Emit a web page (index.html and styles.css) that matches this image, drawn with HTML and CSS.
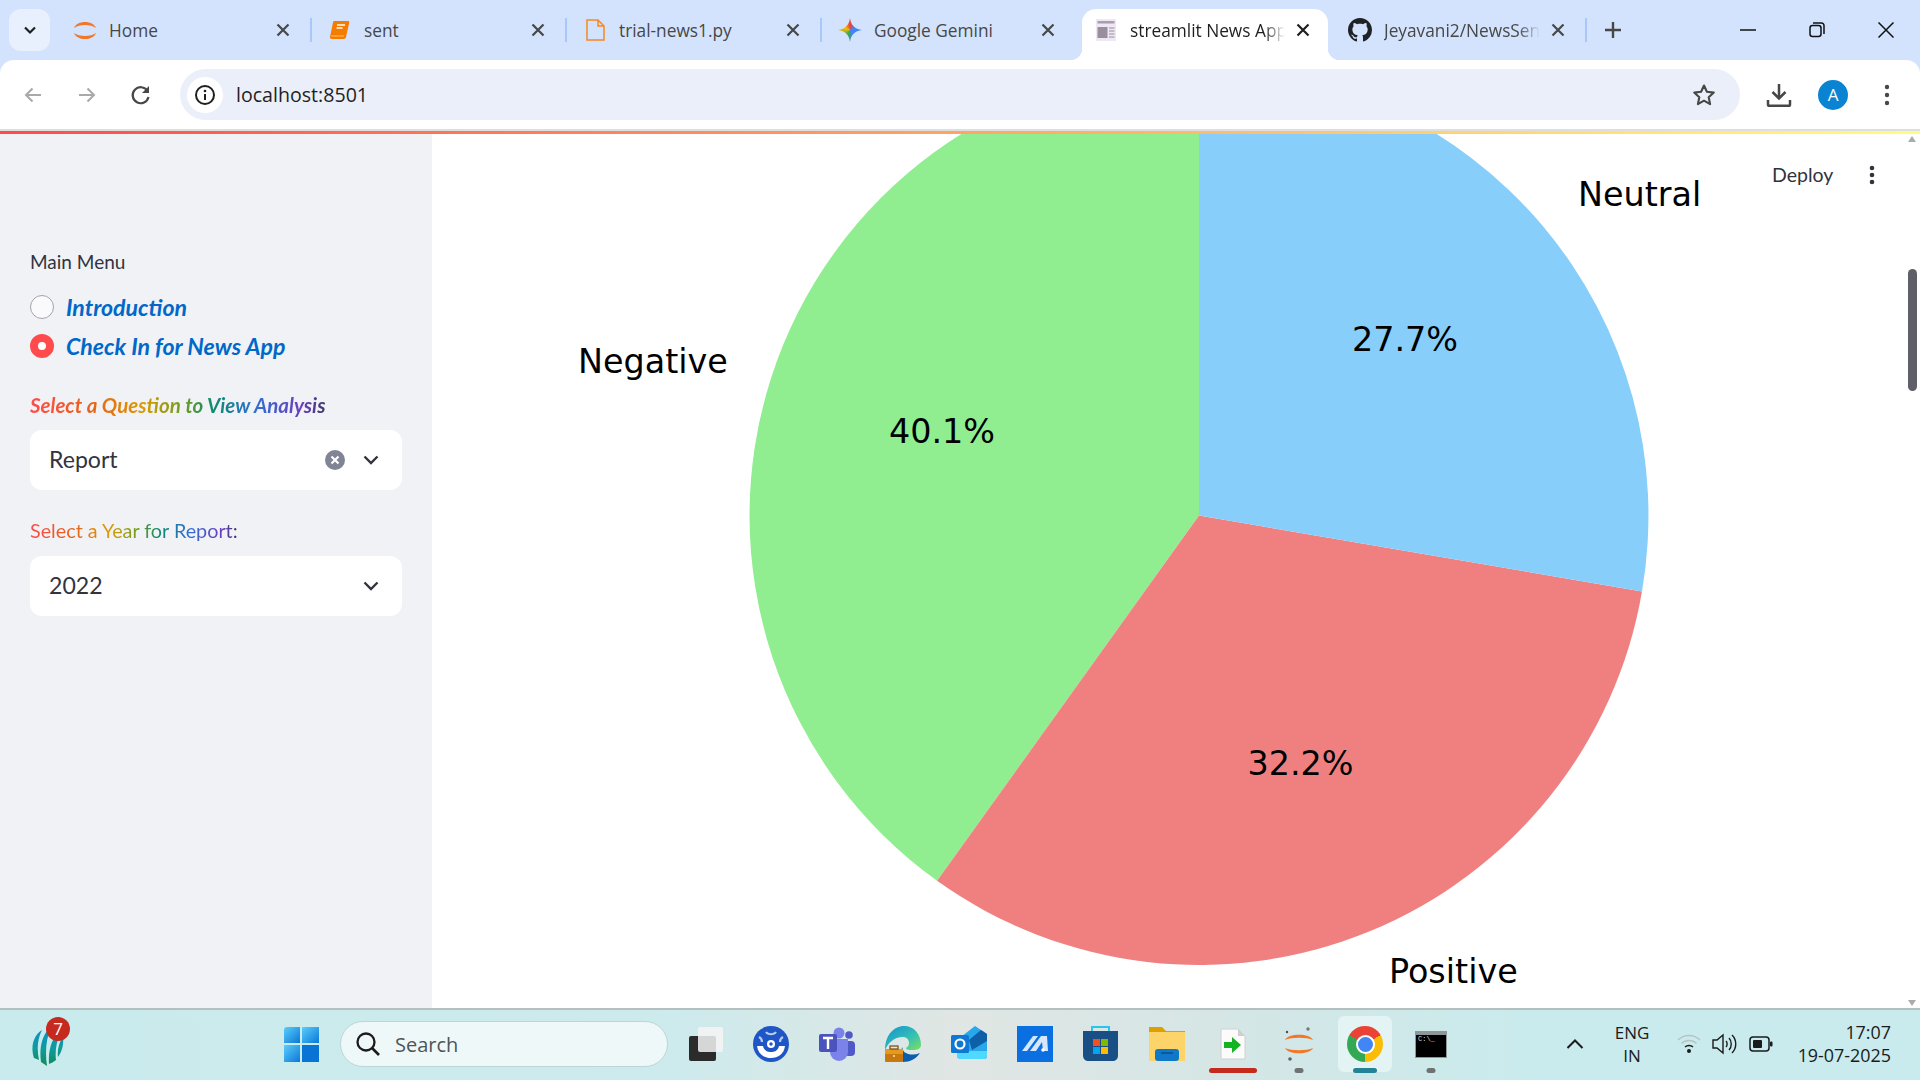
FILE: index.html
```html
<!DOCTYPE html>
<html lang="en">
<head>
<meta charset="UTF-8">
<title>streamlit News App</title>
<link rel="stylesheet" href="styles.css">
</head>
<body>
<!-- chrome tab strip -->
<div class="tabbar">
    <div class="tab-list"><svg width="16" height="16" viewBox="0 0 16 16"><path d="M3 5.5l5 5 5-5" fill="none" stroke="#1f1f1f" stroke-width="2.2"/></svg></div>
    <div class="tab">
        <svg class="fav" width="24" height="24" viewBox="0 0 24 24"><path d="M1 10C4 2 20 2 23 10 18 6 6 6 1 10Z" fill="#f37726"/><path d="M1 15C4 23 20 23 23 15 18 19 6 19 1 15Z" fill="#f37726"/></svg>
        <span class="tab-name">Home</span>
        <svg class="tab-x" width="16" height="16" viewBox="0 0 16 16"><path d="M2.5 2.5l11 11M13.5 2.5l-11 11" stroke="#474747" stroke-width="2.2"/></svg>
    </div>
    <div class="tab">
        <svg class="fav" width="24" height="24" viewBox="0 0 24 24"><path d="M6 3h14c1 0 1.500.6 1.300 1.500L18 19c-.2 1-.9 2-2.300 2H4c-1.500 0-2.300-1-2-2.300L5 4.500C5.200 3.500 5.500 3 6 3Z" fill="#f57c00"/><path d="M9 7h8M8.500 10h6" stroke="#fff" stroke-width="1.300"/><path d="M3 18h13" stroke="#ffb74d" stroke-width="1.200"/></svg>
        <span class="tab-name">sent</span>
        <svg class="tab-x" width="16" height="16" viewBox="0 0 16 16"><path d="M2.500 2.500l11 11M13.500 2.500l-11 11" stroke="#474747" stroke-width="2.200"/></svg>
    </div>
    <div class="tab">
        <svg class="fav" width="24" height="24" viewBox="0 0 24 24"><path d="M4 2h11l6 6v14H4Z M15 2v6h6" fill="none" stroke="#f68a1e" stroke-width="1.500"/></svg>
        <span class="tab-name">trial-news1.py</span>
        <svg class="tab-x" width="16" height="16" viewBox="0 0 16 16"><path d="M2.500 2.500l11 11M13.500 2.500l-11 11" stroke="#474747" stroke-width="2.200"/></svg>
    </div>
    <div class="tab">
        <div class="fav gemini"></div>
        <span class="tab-name">Google Gemini</span>
        <svg class="tab-x" width="16" height="16" viewBox="0 0 16 16"><path d="M2.500 2.500l11 11M13.500 2.500l-11 11" stroke="#474747" stroke-width="2.200"/></svg>
    </div>
    <div class="tab active">
        <svg class="fav" width="24" height="24" viewBox="0 0 24 24"><rect x="2" y="1" width="20" height="22" fill="#efe7f3"/><rect x="3.500" y="3" width="17" height="2.500" fill="#a89eae"/><rect x="3.500" y="9" width="10" height="11" fill="#97909c"/><path d="M15 10h5.500M15 13h5.500M15 16h5.500M15 19h5.500" stroke="#b5aeb9" stroke-width="1.300"/></svg>
        <span class="tab-name fade">streamlit News App</span>
        <svg class="tab-x" width="16" height="16" viewBox="0 0 16 16"><path d="M2.500 2.500l11 11M13.500 2.500l-11 11" stroke="#1f1f1f" stroke-width="2.200"/></svg>
    </div>
    <div class="tab">
        <svg class="fav" width="24" height="24" viewBox="0 0 16 16"><path fill="#1f2328" d="M8 0C3.580 0 0 3.580 0 8c0 3.540 2.290 6.530 5.470 7.590.4.070.55-.17.55-.38 0-.19-.01-.82-.01-1.490-2.010.37-2.530-.49-2.690-.94-.09-.23-.48-.94-.82-1.130-.28-.15-.68-.52-.01-.53.63-.01 1.080.58 1.230.82.720 1.210 1.870.87 2.330.66.070-.52.280-.87.510-1.070-1.780-.2-3.640-.89-3.640-3.950 0-.87.310-1.590.820-2.150-.08-.2-.36-1.020.080-2.120 0 0 .67-.21 2.200.82.640-.18 1.320-.27 2-.27.68 0 1.360.09 2 .27 1.530-1.040 2.200-.82 2.200-.82.440 1.100.160 1.920.080 2.120.510.560.820 1.270.820 2.150 0 3.070-1.870 3.750-3.650 3.950.290.250.540.730.540 1.480 0 1.070-.01 1.930-.01 2.200 0 .210.150.460.550.380A8.013 8.013 0 0016 8c0-4.420-3.580-8-8-8z"/></svg>
        <span class="tab-name fade">Jeyavani2/NewsSentiment</span>
        <svg class="tab-x" width="16" height="16" viewBox="0 0 16 16"><path d="M2.500 2.500l11 11M13.500 2.500l-11 11" stroke="#474747" stroke-width="2.200"/></svg>
    </div>
    <div class="new-tab"><svg width="18" height="18" viewBox="0 0 18 18"><path d="M9 1v16M1 9h16" stroke="#474747" stroke-width="2.400"/></svg></div>
    <div class="win-btns">
        <div class="win-btn"><svg width="16" height="16" viewBox="0 0 16 16"><path d="M0 8h16" stroke="#111" stroke-width="1.500"/></svg></div>
        <div class="win-btn"><svg width="16" height="16" viewBox="0 0 16 16"><rect x="1" y="3.500" width="11" height="11" rx="2.500" fill="none" stroke="#111" stroke-width="1.500"/><path d="M4 1h8.500A2.500 2.500 0 0115 3.500V12" fill="none" stroke="#111" stroke-width="1.500"/></svg></div>
        <div class="win-btn"><svg width="16" height="16" viewBox="0 0 16 16"><path d="M.5.5l15 15M15.500.5l-15 15" stroke="#111" stroke-width="1.500"/></svg></div>
    </div>
</div>

<!-- address bar -->
<div class="toolbar">
    <div class="tool-btn"><svg width="20" height="20" viewBox="0 0 20 20"><path d="M18 10H3M9.500 3.500L3 10l6.500 6.500" fill="none" stroke="#a9a9a9" stroke-width="2"/></svg></div>
    <div class="tool-btn"><svg width="20" height="20" viewBox="0 0 20 20"><path d="M2 10h15M10.500 3.500L17 10l-6.500 6.500" fill="none" stroke="#a9a9a9" stroke-width="2"/></svg></div>
    <div class="tool-btn"><svg width="22" height="22" viewBox="0 0 22 22"><path d="M17.500 7A8 8 0 1018.500 13" fill="none" stroke="#474747" stroke-width="2.200"/><path d="M19 2v7h-7Z" fill="#474747"/></svg></div>
    <div class="omnibox">
        <div class="site-info"><svg width="22" height="22" viewBox="0 0 22 22"><circle cx="11" cy="11" r="9" fill="none" stroke="#1f1f1f" stroke-width="2"/><path d="M11 10v6" stroke="#1f1f1f" stroke-width="2"/><circle cx="11" cy="7" r="1.300" fill="#1f1f1f"/></svg></div>
        <span class="url">localhost:8501</span>
        <svg class="star" width="24" height="24" viewBox="0 0 24 24"><path d="M12 2.500l2.900 6.300 6.900.8-5.100 4.700 1.400 6.800-6.100-3.400-6.100 3.400 1.400-6.800L2.200 9.600l6.900-.8Z" fill="none" stroke="#474747" stroke-width="2.100" stroke-linejoin="round"/></svg>
    </div>
    <div class="tool-btn right-first"><svg width="26" height="26" viewBox="0 0 26 26"><path d="M13 2v14M6.500 10l6.500 6.500 6.500-6.500" fill="none" stroke="#474747" stroke-width="2.500"/><path d="M2 18v4.500c0 .8.500 1.300 1.300 1.300h19.400c.8 0 1.300-.5 1.300-1.300V18" fill="none" stroke="#474747" stroke-width="2.500"/></svg></div>
    <div class="tool-btn"><span class="avatar">A</span></div>
    <div class="tool-btn"><svg width="6" height="22" viewBox="0 0 6 22"><circle cx="3" cy="3" r="2.200" fill="#474747"/><circle cx="3" cy="11" r="2.200" fill="#474747"/><circle cx="3" cy="19" r="2.200" fill="#474747"/></svg></div>
</div>
<div class="decoration"></div>

<!-- streamlit app -->
<div class="app">
    <aside class="sidebar">
        <div class="menu-title">Main Menu</div>
        <div class="radios">
            <div class="radio-row"><span class="radio"></span><em class="radio-label">Introduction</em></div>
            <div class="radio-row"><span class="radio on"></span><em class="radio-label">Check In for News App</em></div>
        </div>
        <div class="rainbow q-label"><em>Select a Question to View Analysis</em></div>
        <div class="select">
            <span class="select-val">Report</span>
            <span class="clear"><svg width="10" height="10" viewBox="0 0 10 10"><path d="M1.500 1.500l7 7M8.500 1.500l-7 7" stroke="#fff" stroke-width="2.200"/></svg></span>
            <svg class="chev" width="16" height="10" viewBox="0 0 16 10"><path d="M1.500 1.500L8 8l6.500-6.500" fill="none" stroke="#31333f" stroke-width="2.400"/></svg>
        </div>
        <div class="rainbow y-label">Select a Year for Report:</div>
        <div class="select year">
            <span class="select-val">2022</span>
            <svg class="chev" width="16" height="10" viewBox="0 0 16 10"><path d="M1.500 1.500L8 8l6.500-6.500" fill="none" stroke="#31333f" stroke-width="2.400"/></svg>
        </div>
    </aside>
    <main class="main">
        <svg class="pie" width="1488" height="874" viewBox="0 0 1488 874">
            <path d="M767 381.500L767 -68A449.500 449.500 0 0 0 505.100 746.800Z" fill="#90ee90"/>
            <path d="M767 381.500L505.100 746.800A449.500 449.500 0 0 0 1210 457.400Z" fill="#f08080"/>
            <path d="M767 381.500L1210 457.400A449.500 449.500 0 0 0 767 -68Z" fill="#87cefa"/>
            <text x="1146" y="72">Neutral</text>
            <text x="146" y="239">Negative</text>
            <text x="957" y="849">Positive</text>
            <text class="pct" x="973" y="217">27.7%</text>
            <text class="pct" x="510" y="309">40.1%</text>
            <text class="pct" x="868.500" y="641">32.2%</text>
        </svg>
        <div class="app-head">
            <span class="deploy">Deploy</span>
            <svg width="6" height="20" viewBox="0 0 6 20"><circle cx="3" cy="3" r="2.300" fill="#31333f"/><circle cx="3" cy="10" r="2.300" fill="#31333f"/><circle cx="3" cy="17" r="2.300" fill="#31333f"/></svg>
        </div>
        <div class="arrow-up"></div>
        <div class="thumb"></div>
        <div class="arrow-down"></div>
    </main>
</div>

<!-- windows taskbar -->
<div class="taskbar">
    <div class="tb-app">
        <svg width="34" height="44" viewBox="0 0 34 44"><defs><linearGradient id="iccg" x1="0" y1="0" x2="0" y2="1"><stop offset="0" stop-color="#0c8fd0"/><stop offset=".55" stop-color="#0f9c9c"/><stop offset="1" stop-color="#128a5c"/></linearGradient></defs><path d="M3 36C-1 24 3 13 11 8 6 18 6 28 8 38ZM10 40C8 26 11 12 20 5 15 17 14 30 16 44ZM18 42C17 28 21 14 30 10 25 20 24 30 25 38 23 40 20 41 18 42ZM27 35C31 30 33 22 32 14 28 21 26 28 27 35Z" fill="url(#iccg)"/></svg>
        <span class="badge">7</span>
    </div>
    <div class="tb-icon"><div class="winlogo"><i></i><i></i><i></i><i></i></div></div>
    <div class="search">
        <svg width="26" height="26" viewBox="0 0 26 26"><circle cx="11" cy="11" r="8.500" fill="none" stroke="#1b1b1b" stroke-width="2.300"/><path d="M17 17l7 7" stroke="#1b1b1b" stroke-width="2.600"/></svg>
        <span>Search</span>
    </div>
    <div class="tb-icons">
        <div class="tb-icon"><svg width="36" height="36" viewBox="0 0 36 36"><rect x="2" y="10" width="27" height="25" rx="2" fill="#2b2b2b"/><rect x="11" y="1" width="25" height="25" rx="2" fill="#f5f5f5" fill-opacity=".85"/></svg></div>
        <div class="tb-icon"><svg width="36" height="36" viewBox="0 0 36 36"><circle cx="18" cy="18" r="18" fill="#1f55c4"/><path d="M4 20h28c-1 8-7 12-14 12S5 28 4 20Z" fill="#fff"/><path d="M10 20c1 5 5 6 8 6s7-1 8-6Z" fill="#1f55c4"/><circle cx="18" cy="18" r="4" fill="#fff"/><circle cx="18" cy="18" r="1.700" fill="#1f55c4"/><path d="M13 6c2 3 8 3 10 0M6 11c2 1 3 3 3 5M30 11c-2 1-3 3-3 5" fill="none" stroke="#b7ccf5" stroke-width="2.200"/></svg></div>
        <div class="tb-icon"><svg width="36" height="36" viewBox="0 0 36 36"><circle cx="30" cy="9" r="3.800" fill="#5059c9"/><rect x="25" y="15" width="11" height="15" rx="4" fill="#5059c9"/><circle cx="20" cy="7" r="5.500" fill="#7b83eb"/><path d="M11 13h18v13a9 9 0 01-18 0Z" fill="#7b83eb"/><rect y="8" width="18" height="18" rx="2" fill="#4b53bc"/><path d="M4 12h10M9 12v11" stroke="#fff" stroke-width="2.400"/></svg></div>
        <div class="tb-icon"><svg width="36" height="36" viewBox="0 0 36 36"><defs><linearGradient id="edgeg" x1="0" y1="0" x2="1" y2="1"><stop offset="0" stop-color="#0f8fd6"/><stop offset=".6" stop-color="#37c2b0"/><stop offset="1" stop-color="#7be05f"/></linearGradient></defs><path d="M0 24C0 9 9 0 19 0c10 0 17 8 17 19 0 4-4 5-8 5-3 0-7 0-7-2 2-1 3-3 3-5 0-4-3-6-6-6-9 0-15 6-18 13Z" fill="url(#edgeg)"/><path d="M18 36c7 0 13-3 17-9-5 2-10 2-14 0-3-1-3-4-4-6-1 5-1 11 1 15Z" fill="#0b5eab"/><rect y="23" width="18" height="13" rx="1" fill="#c9780f"/><rect y="23" width="18" height="5" fill="#e39a1e"/><rect x="5" y="20" width="8" height="3" fill="none" stroke="#7a4a08" stroke-width="1.200"/><circle cx="9" cy="30" r="1" fill="#ffe7a8"/></svg></div>
        <div class="tb-icon"><svg width="36" height="36" viewBox="0 0 36 36"><path d="M6 14L24 0l12 8v22c0 2-1 3-3 3H10c-2 0-4-1-4-3Z" fill="#28a8ea"/><path d="M18 14L30 4l6 4v7L21 24Z" fill="#0f5fa6"/><path d="M6 30V19l12 6h18v5c0 2-1 3-3 3H10c-2 0-4-1-4-3Z" fill="#50d9ff"/><rect y="9" width="18" height="18" rx="1.500" fill="#0f78d4"/><circle cx="9" cy="18" r="4.500" fill="none" stroke="#fff" stroke-width="2.200"/></svg></div>
        <div class="tb-icon"><svg width="36" height="36" viewBox="0 0 36 36"><rect width="36" height="36" fill="#0a6fe0"/><path d="M5 25L16 10h5L10 25ZM13 25l11-15h6l1 15h-5l-1-9-6 9Z" fill="#d6e6fb"/><circle cx="26" cy="24" r="1.800" fill="#fff"/></svg></div>
        <div class="tb-icon"><svg width="36" height="36" viewBox="0 0 36 36"><path d="M9 6V1h17v5" fill="none" stroke="#2bc4f0" stroke-width="2"/><path d="M0 5h35v24c0 4-2 6-6 6H6c-4 0-6-2-6-6Z" fill="#1a4f86"/><rect x="10" y="13" width="7" height="7" fill="#f25022"/><rect x="18" y="13" width="7" height="7" fill="#7fba00"/><rect x="10" y="21" width="7" height="7" fill="#00a4ef"/><rect x="18" y="21" width="7" height="7" fill="#ffb900"/></svg></div>
        <div class="tb-icon"><svg width="36" height="34" viewBox="0 0 36 34"><path d="M0 0h13l4 4h19v30H0Z" fill="#dca100"/><rect y="5" width="36" height="29" fill="#fcd46a"/><rect x="6" y="22" width="24" height="12" rx="3" fill="#0f78c9"/><path d="M12 26h12" stroke="#0a4f8c" stroke-width="1.500"/></svg></div>
        <div class="tb-icon"><svg width="26" height="32" viewBox="0 0 26 32"><path d="M1 1h17l7 7v23H1Z" fill="#fbfbfb" stroke="#d0d0d0"/><path d="M18 1v7h7Z" fill="#cfcfcf"/><path d="M4 14h8V9l9 8-9 8v-5H4Z" fill="#14b321"/></svg><span class="mark red"></span></div>
        <div class="tb-icon"><svg width="30" height="36" viewBox="0 0 30 36"><path d="M1 14C4 7 26 7 29 14 23 11 7 11 1 14Z" fill="#f37726"/><path d="M1 22C4 29 26 29 29 22 23 25 7 25 1 22Z" fill="#f37726"/><circle cx="3" cy="6" r="1.200" fill="#4e4e4e"/><circle cx="24" cy="3" r="1.700" fill="#767677"/><circle cx="6" cy="33" r="1.800" fill="#616262"/></svg><span class="mark dot"></span></div>
        <div class="tb-icon current"><div class="chrome"><div class="chrome-in"></div></div><span class="mark teal"></span></div>
        <div class="tb-icon"><div class="cmd"><span>C:\_</span></div><span class="mark dot"></span></div>
    </div>
    <div class="tray">
        <div class="tray-cell chev-up"><svg width="18" height="12" viewBox="0 0 18 12"><path d="M1.500 10L9 2.500 16.500 10" fill="none" stroke="#1b1b1b" stroke-width="2"/></svg></div>
        <div class="lang">ENG<br>IN</div>
        <div class="tray-cell"><svg width="24" height="20" viewBox="0 0 24 20"><path d="M1 6c6-6 16-6 22 0M4.500 9.500c4-4 11-4 15 0" fill="none" stroke="#b5c4c4" stroke-width="1.300"/><path d="M8 13c2-2 6-2 8 0" fill="none" stroke="#1b1b1b" stroke-width="1.400"/><circle cx="12" cy="17" r="2" fill="#1b1b1b"/></svg></div>
        <div class="tray-cell"><svg width="26" height="22" viewBox="0 0 26 22"><path d="M1 7h4l6-5v18l-6-5H1Z" fill="none" stroke="#1b1b1b" stroke-width="1.400"/><path d="M14 8c1.500 1.500 1.500 4.500 0 6M17 5c3 3 3 9 0 12M20 2c5 5 5 13 0 18" fill="none" stroke="#1b1b1b" stroke-width="1.400"/></svg></div>
        <div class="tray-cell"><svg width="24" height="16" viewBox="0 0 24 16"><rect x="1" y="1" width="19" height="14" rx="3" fill="none" stroke="#1b1b1b" stroke-width="1.500"/><rect x="4" y="4" width="9" height="8" rx="1" fill="#1b1b1b"/><rect x="21" y="5.500" width="2.500" height="5" rx="1" fill="#1b1b1b"/></svg></div>
        <div class="clock">17:07<br>19-07-2025</div>
    </div>
</div>
</body>
</html>
```

FILE: styles.css
```css
html{
    background: #fff;
}
html, body{
    margin: 0;
    height: 1080px;
    overflow: hidden;
}
body{
    font-family: "Open Sans", "Noto Sans", sans-serif;
    width: 1920px;
    background: #d3e3fd; /* shows through the rounded toolbar corners */
    display: flex;
    flex-direction: column;
}
svg{
    display: block;
    flex-shrink: 0;
}

/* tab strip */
.tabbar{
    height: 60px;
    flex-shrink: 0;
    background: #d3e3fd;
    display: flex;
    align-items: flex-end;
    padding-left: 9px;
}
.tab-list{
    width: 41px;
    height: 42px;
    margin: 0 7px 9px 0;
    border-radius: 12px;
    background: #e9f0fd;
    display: flex;
    align-items: center;
    justify-content: center;
}
.tab{
    width: 255px;
    height: 51px;
    box-sizing: border-box;
    padding: 0 21px 9px 16px;
    display: flex;
    align-items: center;
    position: relative;
}
.tab::after{
    content: "";
    position: absolute;
    right: 0;
    top: 9px;
    width: 2px;
    height: 24px;
    background: #a8c7fa;
}
.fav{
    width: 24px;
    height: 24px;
}
.gemini{
    background: conic-gradient(#ea4335 0deg, #4285f4 70deg, #4285f4 150deg, #34a853 200deg, #fbbc04 290deg, #ea4335 360deg);
    clip-path: path("M12 0C12.800 7 17 11.200 24 12C17 12.800 12.800 17 12 24C11.200 17 7 12.800 0 12C7 11.200 11.200 7 12 0Z");
}
.tab-name{
    flex: 1;
    margin-left: 12px;
    font-size: 17.300px;
    color: #474747;
    white-space: nowrap;
    overflow: hidden;
}
.tab-name.fade{
    margin-right: 5px;
    -webkit-mask-image: linear-gradient(to right, #000 86%, transparent 100%);
    mask-image: linear-gradient(to right, #000 86%, transparent 100%);
}
.tab-x{
    margin-left: 5px;
}
.tab:nth-child(5)::after, .tab.active::after{
    display: none;
}
.tab.active{
    width: 246px;
    margin: 0 4px 0 5px;
    padding: 0 17px 9px 12px;
    background: #fff;
    border-radius: 14px 14px 0 0;
}
.tab.active::before{
    content: "";
    position: absolute;
    left: -12px;
    right: -12px;
    bottom: 0;
    height: 12px;
    background:
        radial-gradient(circle at 0 0, #d3e3fd 12px, #fff 12.500px) left bottom / 12px 12px no-repeat,
        radial-gradient(circle at 100% 0, #d3e3fd 12px, #fff 12.500px) right bottom / 12px 12px no-repeat;
}
.tab.active .tab-name{
    color: #1f1f1f;
}
.new-tab{
    width: 52px;
    height: 42px;
    margin-bottom: 9px;
    display: flex;
    align-items: center;
    justify-content: center;
}
.win-btns{
    margin-left: auto;
    align-self: flex-start;
    display: flex;
}
.win-btn{
    width: 69px;
    height: 60px;
    display: flex;
    align-items: center;
    justify-content: center;
}

/* address bar */
.toolbar{
    height: 69px;
    flex-shrink: 0;
    box-sizing: border-box;
    background: #fff;
    border-radius: 14px 14px 0 0;
    padding: 0 6px 0 6px;
    display: flex;
    align-items: center;
}
.tool-btn{
    width: 54px;
    height: 54px;
    display: flex;
    align-items: center;
    justify-content: center;
}
.right-first{
    margin-left: 12px;
}
.omnibox{
    flex: 1;
    height: 51px;
    margin-left: 12px;
    padding: 0 24px 0 7px;
    background: #ebeff9;
    border-radius: 26px;
    display: flex;
    align-items: center;
}
.site-info{
    width: 36px;
    height: 36px;
    border-radius: 50%;
    background: #fff;
    display: flex;
    align-items: center;
    justify-content: center;
}
.url{
    flex: 1;
    margin-left: 13px;
    font-size: 19.600px;
    color: #1f1f1f;
}
.avatar{
    width: 30px;
    height: 30px;
    border-radius: 50%;
    background: #0a84d2;
    color: #fff;
    font-size: 17px;
    line-height: 30px;
    text-align: center;
}
.decoration{
    height: 3px;
    flex-shrink: 0;
    border-top: 2px solid #dedede;
    background: linear-gradient(90deg, #ff4b4b, #fffd80);
}

/* streamlit */
.app{
    height: 874px;
    flex-shrink: 0;
    display: flex;
    background: #fff;
    font-family: "Lato", "Noto Sans", sans-serif;
    color: #31333f;
}
.sidebar{
    width: 432px;
    flex-shrink: 0;
    box-sizing: border-box;
    background: #f0f2f6;
    padding: 116px 30px 0;
}
.menu-title{
    font-size: 19px;
    line-height: 24px;
}
.radios{
    margin-top: 13px;
}
.radio-row{
    height: 39px;
    display: flex;
    align-items: center;
    gap: 12px;
}
.radio{
    width: 24px;
    height: 24px;
    box-sizing: border-box;
    border-radius: 50%;
    background: #fafafc;
    border: 1.500px solid #a3a3aa;
}
.radio.on{
    background: #fff;
    border: 8px solid #ff4b4b;
}
.radio-label{
    font-size: 23.100px;
    font-weight: 700;
    color: #0068c9;
}
.rainbow{
    line-height: 24px;
    width: max-content;
    background: linear-gradient(to right, #ff4b4b, #e8601c 20%, #dc9a00 38%, #6f9c22 52%, #0f8a6e 62%, #2f6fd0 76%, #6a3fc0 92%, #3d3a6a);
    -webkit-background-clip: text;
    background-clip: text;
    color: transparent;
}
.q-label{
    margin-top: 28px;
    font-size: 20.500px;
    font-weight: 700;
}
.y-label{
    margin-top: 28px;
    font-size: 19.800px;
}
.select{
    height: 60px;
    margin-top: 13px;
    box-sizing: border-box;
    background: #fff;
    border-radius: 12px;
    padding: 0 23px 0 19px;
    display: flex;
    align-items: center;
}
.select.year{
    margin-top: 14px;
}
.select-val{
    flex: 1;
    font-size: 23.100px;
    padding-bottom: 2px;
}
.clear{
    width: 20px;
    height: 20px;
    margin-right: 18px;
    border-radius: 50%;
    background: #808495;
    display: flex;
    align-items: center;
    justify-content: center;
}
.main{
    flex: 1;
    position: relative;
    overflow: hidden;
}
.pie text{
    font-family: "DejaVu Sans", sans-serif;
    font-size: 33.400px;
    fill: #000;
}
.pie .pct{
    text-anchor: middle;
}
.app-head{
    position: absolute;
    top: 29px;
    left: 1340px;
    display: flex;
    align-items: center;
    gap: 36px;
}
.deploy{
    font-size: 19.500px;
}
.thumb{
    position: absolute;
    left: 1476px;
    top: 135px;
    width: 9px;
    height: 122px;
    border-radius: 5px;
    background: #5f5f68;
}
.arrow-up, .arrow-down{
    position: absolute;
    left: 1476px;
    width: 0;
    height: 0;
    border-left: 4.500px solid transparent;
    border-right: 4.500px solid transparent;
}
.arrow-up{
    top: 2px;
    border-bottom: 6px solid #ababab;
}
.arrow-down{
    bottom: 2px;
    border-top: 6px solid #ababab;
}

/* taskbar */
.taskbar{
    height: 72px;
    flex-shrink: 0;
    box-sizing: border-box;
    border-top: 2px solid #b4c0c0;
    padding-bottom: 2px;
    background: linear-gradient(90deg, #c9ebed 0%, #cdeaec 35%, #e0e6e4 50%, #d4e6e6 65%, #c9ebed 80%, #c9ebed 100%);
    display: flex;
    align-items: center;
}
.tb-app{
    width: 96px;
    margin-right: 178px;
    padding: 0 0 0 31px;
    box-sizing: border-box;
    position: relative;
}
.badge{
    position: absolute;
    left: 46px;
    top: -5px;
    width: 24px;
    height: 24px;
    border-radius: 50%;
    background: #c62a1f;
    color: #fff;
    font: 17px/24px "Open Sans", sans-serif;
    text-align: center;
}
.tb-icons{
    display: flex;
    gap: 12px;
    margin-left: 10px;
}
.tb-icon{
    width: 54px;
    height: 56px;
    box-sizing: border-box;
    display: flex;
    align-items: center;
    justify-content: center;
    position: relative;
}
.tb-icon.current{
    background: #e4f3f4;
    border-radius: 6px;
}
.winlogo{
    width: 35px;
    height: 35px;
    display: grid;
    grid-template-columns: 1fr 1fr;
    gap: 1.500px;
}
.winlogo i{
    background: linear-gradient(135deg, #5bcdfb, #0a78d8);
}
.winlogo i:first-child{
    border-radius: 3px 0 0 0;
}
.winlogo i:last-child{
    background: #0a74d6;
}
.search{
    width: 328px;
    height: 46px;
    margin-left: 12px;
    box-sizing: border-box;
    padding-left: 14px;
    border-radius: 23px;
    border: 1.500px solid #bcd6d8;
    background: #eff8f9;
    display: flex;
    align-items: center;
    gap: 14px;
    font-size: 20px;
    color: #4d5556;
}
.mark{
    position: absolute;
    left: 50%;
    bottom: -1px;
    height: 5px;
    transform: translateX(-50%);
    border-radius: 3px;
}
.mark.red{
    width: 48px;
    background: #c42b1c;
}
.mark.dot{
    width: 9px;
    background: #6e7272;
}
.mark.teal{
    width: 24px;
    background: #258397;
}
.chrome{
    width: 36px;
    height: 36px;
    border-radius: 50%;
    background: conic-gradient(#ea4335 0 60deg, #fbbc04 60deg 180deg, #34a853 180deg 300deg, #ea4335 300deg);
    display: flex;
    align-items: center;
    justify-content: center;
}
.chrome-in{
    width: 15px;
    height: 15px;
    border-radius: 50%;
    background: #4285f4;
    border: 2.500px solid #fff;
}
.cmd{
    width: 32px;
    height: 27px;
    box-sizing: border-box;
    border: 1.500px solid #8e9696;
    border-top-width: 4px;
    background: #000;
    color: #ddd;
    font: 7px/9px "Liberation Mono", monospace;
    padding-left: 2px;
    overflow: hidden;
}
.tray{
    margin-left: auto;
    padding-right: 29px;
    display: flex;
    align-items: center;
    color: #1b1b1b;
}
.tray-cell{
    width: 36px;
    display: flex;
    justify-content: center;
}
.chev-up{
    width: 40px;
}
.lang{
    width: 40px;
    margin: 0 19px 0 17px;
    font-size: 17px;
    line-height: 23px;
    text-align: center;
}
.clock{
    width: 112px;
    font-size: 17.900px;
    line-height: 23px;
    text-align: right;
}
```
